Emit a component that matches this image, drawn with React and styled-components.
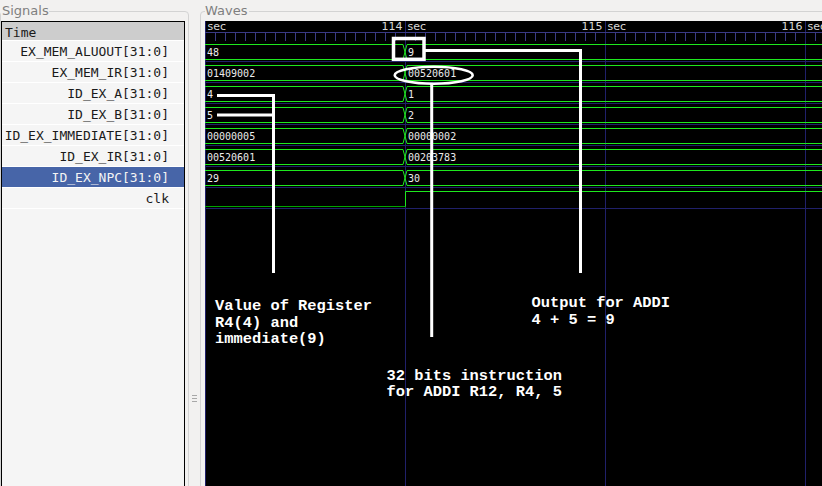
import React from "react";
import styled, { createGlobalStyle } from "styled-components";

const GlobalStyle = createGlobalStyle`
  html, body {
    margin: 0;
    padding: 0;
    overflow: hidden;
    background: #f2f1f0;
  }
  body {
    font-family: "DejaVu Sans", sans-serif;
  }
`;

const signals = [
  { name: "EX_MEM_ALUOUT[31:0]", before: "48", after: "9" },
  { name: "EX_MEM_IR[31:0]", before: "01409002", after: "00520601" },
  { name: "ID_EX_A[31:0]", before: "4", after: "1" },
  { name: "ID_EX_B[31:0]", before: "5", after: "2" },
  { name: "ID_EX_IMMEDIATE[31:0]", before: "00000005", after: "00000002" },
  { name: "ID_EX_IR[31:0]", before: "00520601", after: "00203783" },
  { name: "ID_EX_NPC[31:0]", before: "29", after: "30", selected: true },
  { name: "clk", clock: true },
];

const ROW_TOP = 41;
const ROW_H = 21;
const EDGE_X = 405;
const RIGHT = 830;

const Window = styled.div`
  width: 822px;
  height: 486px;
  display: flex;
  overflow: hidden;
  background: #f2f1f0;
`;

const Frame = styled.fieldset`
  flex: none;
  box-sizing: border-box;
  width: ${(p) => p.$width}px;
  height: 530px;
  margin: 0;
  padding: 0 0 0 ${(p) => p.$padLeft}px;
  min-width: 0;
  border: 1px solid #d3d3d3;
  border-radius: 4px;
`;

const Title = styled.legend`
  height: 22px;
  margin: 0;
  padding: 0 ${(p) => p.$padRight}px 0 ${(p) => p.$padLeft}px;
  font: 13px/22px "DejaVu Sans", sans-serif;
  color: #7f7f7f;
`;

const SignalList = styled.div`
  box-sizing: border-box;
  width: 184px;
  height: 500px;
  margin-top: -1px;
  border: 1px solid #000;
  background: #f5f5f5;
`;

const HeaderRow = styled.div`
  box-sizing: border-box;
  height: 19px;
  padding-left: 3px;
  border-bottom: 1px solid #fff;
  background: #cdcdcd;
  font: 13px/22px "DejaVu Sans Mono", monospace;
  color: #1a1a1a;
  overflow: hidden;
`;

const SignalRow = styled.div`
  box-sizing: border-box;
  height: ${ROW_H}px;
  padding-right: 15px;
  border-bottom: 1px solid #fff;
  text-align: right;
  white-space: nowrap;
  font: 13px/21px "DejaVu Sans Mono", monospace;
  color: ${(p) => (p.$selected ? "#f4f4f4" : "#1a1a1a")};
  background: ${(p) => (p.$selected ? "#4765a8" : "transparent")};
  overflow: hidden;
`;

const Handle = styled.div`
  flex: none;
  width: 11px;
  padding-top: 395px;
  display: flex;
  justify-content: center;
`;

const Grip = styled.div`
  width: 5px;
  height: 7px;
  background: repeating-linear-gradient(
    to bottom,
    #a8a8a8 0 1px,
    transparent 1px 3px
  );
`;

const WaveCanvas = styled.svg`
  display: block;
  margin-top: -1px;
  background: #000;
`;

const BUS = "#1ee81e";
const LOW = "#00a400";
const GRID = "#20206a";
const TICK = "#3a3a84";

function TimeRuler() {
  const ticks = [];
  for (let x = 215; x < RIGHT; x += 10) {
    if ((x - 205) % 200 !== 0) {
      ticks.push(
        <line key={x} x1={x + 0.5} y1={33} x2={x + 0.5} y2={41} stroke={TICK} />
      );
    }
  }
  // the "113" label of the first major line lies left of the view
  const majors = [
    { x: 205, label: "" },
    { x: 405, label: "114" },
    { x: 605, label: "115" },
    { x: 805, label: "116" },
  ];
  return (
    <g>
      <line x1={205} y1={32.5} x2={RIGHT} y2={32.5} stroke={TICK} />
      {ticks}
      {majors.map((m) => (
        <g key={m.x} fontFamily='"DejaVu Sans", sans-serif' fontSize="11" fill="#d9d9d9">
          {m.label && (
            <text x={m.x - 2.5} y={29.5} textAnchor="end">
              {m.label}
            </text>
          )}
          <text x={m.x + 2.5} y={29.5}>
            sec
          </text>
        </g>
      ))}
    </g>
  );
}

function Grid() {
  return (
    <g stroke={GRID}>
      {[205, 405, 605, 805].map((x) => (
        <line key={x} x1={x + 0.5} y1={21} x2={x + 0.5} y2={500} />
      ))}
      {signals.map((s, i) => {
        const y = ROW_TOP + i * ROW_H + 20.5;
        return <line key={s.name} x1={205} y1={y} x2={RIGHT} y2={y} />;
      })}
    </g>
  );
}

function BusTrace({ index, before, after }) {
  const top = ROW_TOP + index * ROW_H + 3.5;
  const bottom = top + 15;
  const mid = (top + bottom) / 2;
  const a = EDGE_X - 2;
  const b = EDGE_X + 2;
  const d = `M205 ${top} H${a} L${EDGE_X} ${mid} L${b} ${top} H${RIGHT} M205 ${bottom} H${a} L${EDGE_X} ${mid} L${b} ${bottom} H${RIGHT}`;
  const base = ROW_TOP + index * ROW_H + 15;
  return (
    <g>
      <path d={d} stroke={BUS} fill="none" />
      <g fontFamily='"DejaVu Sans Mono", monospace' fontSize="10" fill="#ececec">
        <text x={207} y={base}>
          {before}
        </text>
        <text x={408} y={base}>
          {after}
        </text>
      </g>
    </g>
  );
}

function ClockTrace({ index }) {
  const high = ROW_TOP + index * ROW_H + 3.5;
  const low = high + 15;
  return (
    <g fill="none">
      <path d={`M205 ${low} H${EDGE_X + 0.5}`} stroke={LOW} />
      <path d={`M${EDGE_X + 0.5} ${low} V${high} H${RIGHT}`} stroke={BUS} />
    </g>
  );
}

function Annotations() {
  return (
    <g stroke="#fff" fill="none" strokeWidth="3">
      <path d="M217 95.5 H273.5 V273" />
      <path d="M217 115 H273.5" />
      <rect x={393.5} y={38.5} width={30.5} height={20.8} strokeWidth="3.5" />
      <path d="M425 50.5 H580.5 V273" />
      <ellipse cx={433.7} cy={75.3} rx={39} ry={8.5} strokeWidth="2.6" />
      <path d="M431.7 84 V337" />
      <g
        stroke="none"
        fill="#fff"
        fontFamily='"Liberation Mono", monospace'
        fontWeight="bold"
        fontSize="15.4"
      >
        <text x={215} y={309.8}>Value of Register</text>
        <text x={215} y={326.6}>R4(4) and</text>
        <text x={215} y={343.4}>immediate(9)</text>
        <text x={531.5} y={306.7}>Output for ADDI</text>
        <text x={531.5} y={323.5}>4 + 5 = 9</text>
        <text x={386.5} y={379.8}>32 bits instruction</text>
        <text x={386.5} y={396.2}>for ADDI R12, R4, 5</text>
      </g>
    </g>
  );
}

export default function App() {
  return (
    <>
      <GlobalStyle />
      <Window>
        <Frame $width={189} $padLeft={0}>
          <Title $padLeft={1} $padRight={0}>
            Signals
          </Title>
          <SignalList>
            <HeaderRow>Time</HeaderRow>
            {signals.map((s) => (
              <SignalRow key={s.name} $selected={s.selected}>
                {s.name}
              </SignalRow>
            ))}
          </SignalList>
        </Frame>
        <Handle>
          <Grip />
        </Handle>
        <Frame $width={640} $padLeft={4}>
          <Title $padLeft={0} $padRight={2}>
            Waves
          </Title>
          <WaveCanvas width={625} height={480} viewBox="205 21 625 480">
            <rect x={205} y={21} width={625} height={480} fill="#000" />
            <Grid />
            <TimeRuler />
            {signals.map((s, i) =>
              s.clock ? (
                <ClockTrace key={s.name} index={i} />
              ) : (
                <BusTrace key={s.name} index={i} before={s.before} after={s.after} />
              )
            )}
            <Annotations />
          </WaveCanvas>
        </Frame>
      </Window>
    </>
  );
}
